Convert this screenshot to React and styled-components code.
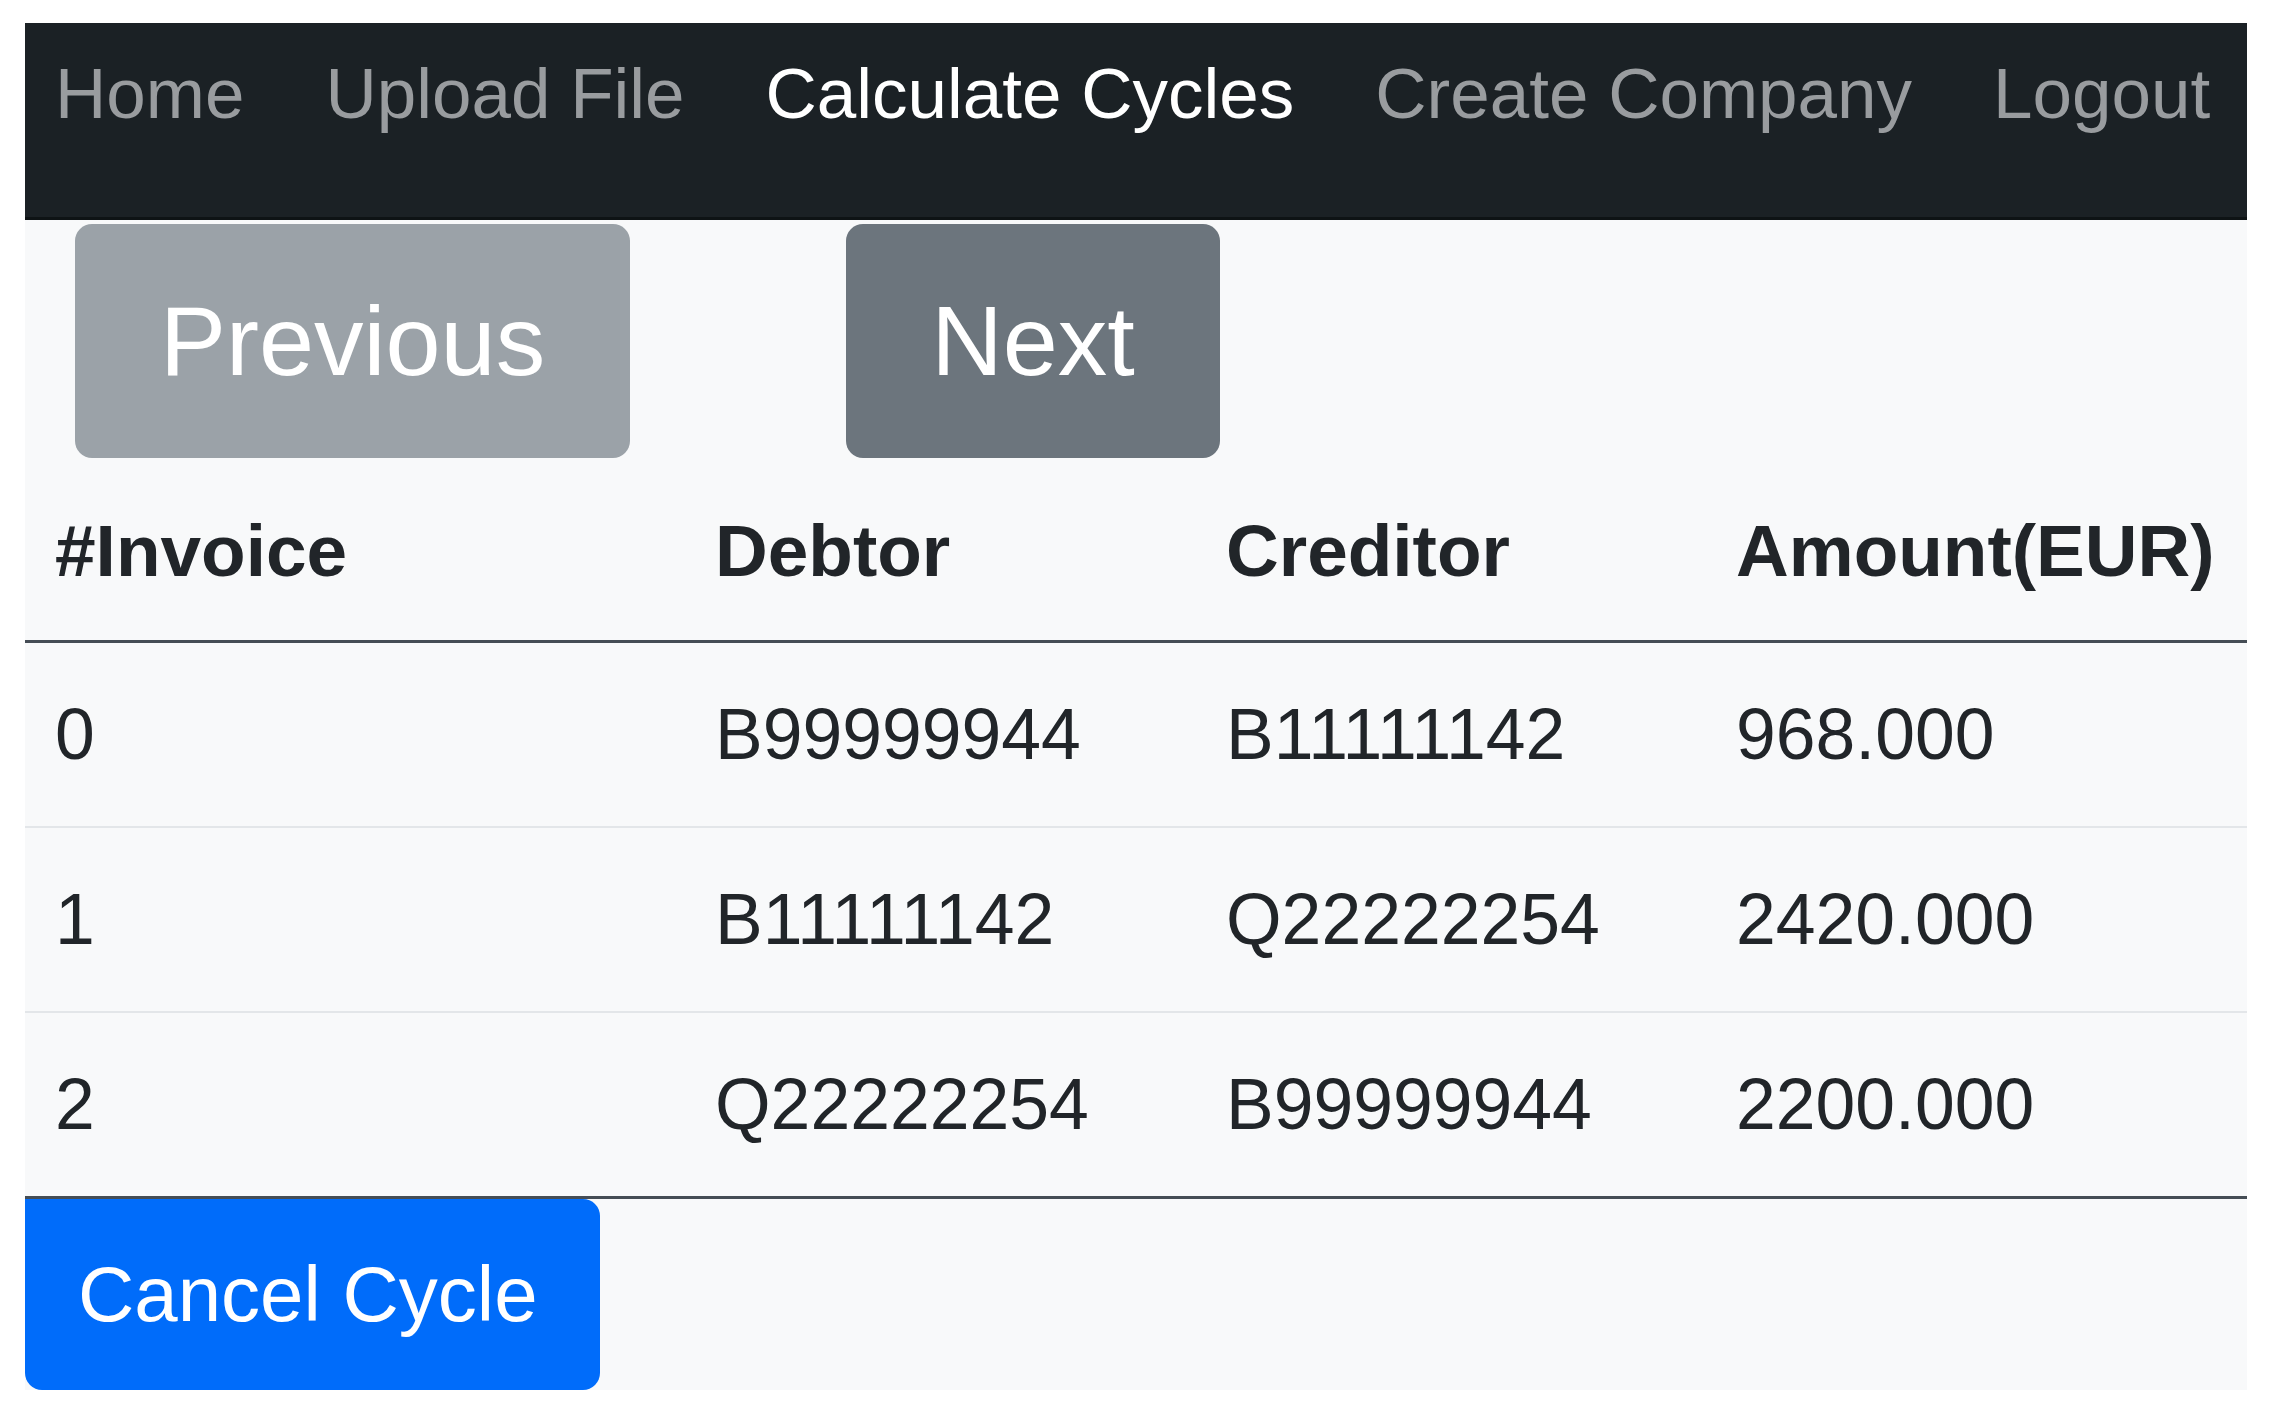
import React from "react";
import styled, { createGlobalStyle } from "styled-components";

const GlobalStyle = createGlobalStyle`
  body {
    margin: 0;
    background: #ffffff;
    font-family: "Liberation Sans", Arial, sans-serif;
    color: #212529;
  }
`;

const Page = styled.div`
  padding: 23px 22px 25px 25px;
`;

// NAVBAR
const NavBar = styled.nav`
  height: 197px;
  box-sizing: border-box;
  background: #1b2125;
  border-bottom: 3px solid #0e1315;
  display: flex;
  align-items: flex-start;
  gap: 81px;
  padding: 31px 0 0 30px;
`;

const NavLink = styled.a`
  font-size: 71px;
  line-height: 80px;
  color: ${(props) => (props.active ? "#ffffff" : "#999c9f")};
  text-decoration: none;
  white-space: nowrap;
`;

// CONTENT
const Content = styled.main`
  background: #f8f9fa;
`;

const Pager = styled.div`
  display: flex;
  gap: 216px;
  padding: 4px 0 0 50px;
`;

const PageButton = styled.button`
  font-family: "Liberation Sans", Arial, sans-serif;
  font-size: 99px;
  line-height: 148px;
  padding: 43px 85px 43px;
  border: none;
  border-radius: 17px;
  color: #ffffff;
  background: ${(props) => (props.disabled ? "#9ba2a8" : "#6c757d")};
`;

const Table = styled.table`
  width: 100%;
  border-collapse: collapse;
  table-layout: fixed;
`;

const Col = styled.col`
  width: ${(props) => props.w}px;
`;

const Th = styled.th`
  text-align: left;
  font-size: 73px;
  font-weight: bold;
  line-height: 107px;
  padding: 39px 12px 36px 30px;
  border-bottom: 3px solid #454d55;
  white-space: nowrap;
`;

const Td = styled.td`
  font-size: 71.5px;
  line-height: 107px;
  padding: 38px 12px 38px 30px;
  border-bottom: ${(props) =>
    props.last ? "3px solid #454d55" : "2px solid #e3e6e9"};
  white-space: nowrap;
`;

const CancelButton = styled.button`
  font-family: "Liberation Sans", Arial, sans-serif;
  font-size: 78px;
  line-height: 115px;
  padding: 38px 62px 38px 53px;
  border: none;
  border-radius: 0 17px 17px 17px;
  color: #ffffff;
  background: #006cfa;
  display: block;
`;

const invoices = [
  { id: 0, debtor: "B99999944", creditor: "B11111142", amount: "968.000" },
  { id: 1, debtor: "B11111142", creditor: "Q22222254", amount: "2420.000" },
  { id: 2, debtor: "Q22222254", creditor: "B99999944", amount: "2200.000" },
];

const App = () => {
  return (
    <Page>
      <GlobalStyle />
      <NavBar>
        <NavLink href="#">Home</NavLink>
        <NavLink href="#">Upload File</NavLink>
        <NavLink href="#" active>
          Calculate Cycles
        </NavLink>
        <NavLink href="#">Create Company</NavLink>
        <NavLink href="#">Logout</NavLink>
      </NavBar>
      <Content>
        <Pager>
          <PageButton disabled>Previous</PageButton>
          <PageButton>Next</PageButton>
        </Pager>
        <Table>
          <colgroup>
            <Col w={660} />
            <Col w={511} />
            <Col w={510} />
            <Col w={541} />
          </colgroup>
          <thead>
            <tr>
              <Th>#Invoice</Th>
              <Th>Debtor</Th>
              <Th>Creditor</Th>
              <Th>Amount(EUR)</Th>
            </tr>
          </thead>
          <tbody>
            {invoices.map((inv, i) => {
              const last = i === invoices.length - 1;
              return (
                <tr key={inv.id}>
                  <Td last={last}>{inv.id}</Td>
                  <Td last={last}>{inv.debtor}</Td>
                  <Td last={last}>{inv.creditor}</Td>
                  <Td last={last}>{inv.amount}</Td>
                </tr>
              );
            })}
          </tbody>
        </Table>
        <CancelButton>Cancel Cycle</CancelButton>
      </Content>
    </Page>
  );
};

export default App;
